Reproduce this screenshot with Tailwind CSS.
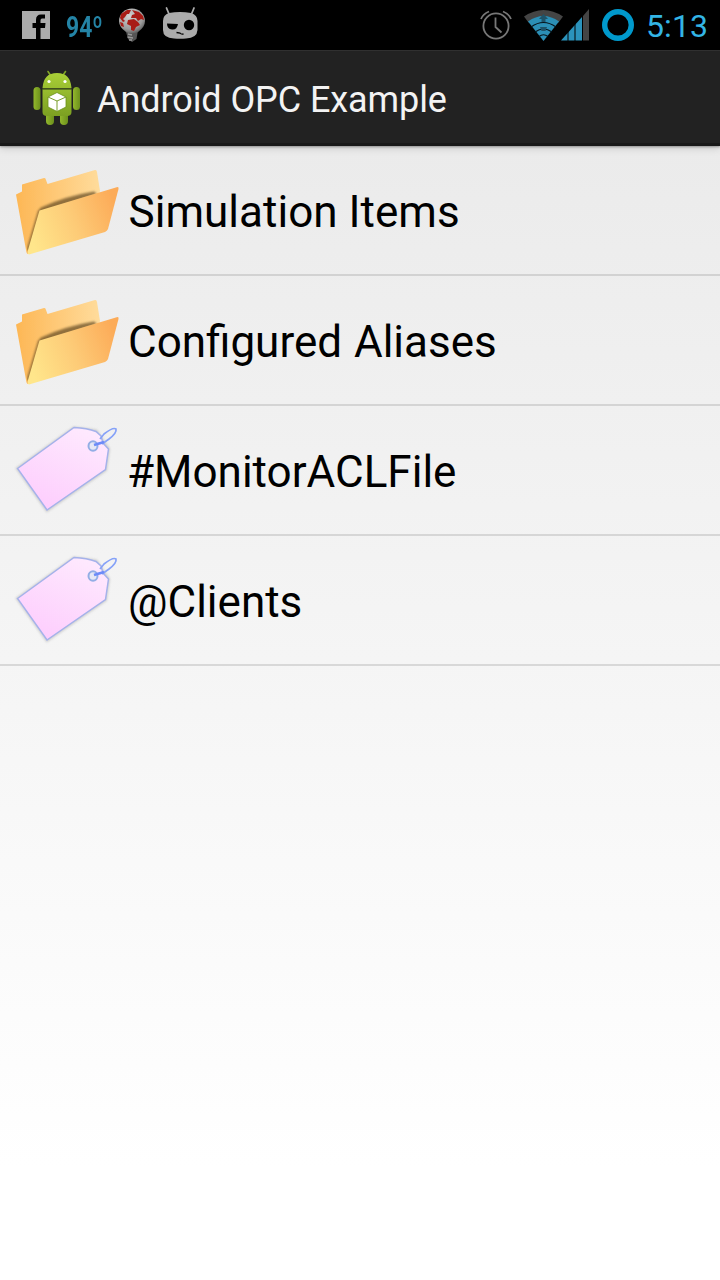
<!DOCTYPE html>
<html lang="en">
<head>
<meta charset="utf-8">
<meta name="viewport" content="width=device-width">
<title>Android OPC Example</title>
<script src="https://cdn.jsdelivr.net/npm/@tailwindcss/browser@4"></script>
</head>
<body class="w-[720px] h-[1280px] overflow-hidden flex flex-col font-[Roboto,sans-serif] bg-white">
<svg class="absolute w-0 h-0" aria-hidden="true">
  <defs>
    <linearGradient id="back" x1="0" x2="1"><stop offset="0" stop-color="#fdb755"/><stop offset="1" stop-color="#ffdc9c"/></linearGradient>
    <linearGradient id="front" x1="0" y1=".65" x2="1" y2=".35"><stop offset="0" stop-color="#ffe68b"/><stop offset=".5" stop-color="#fdcb77"/><stop offset="1" stop-color="#fcab58"/></linearGradient>
    <linearGradient id="pink" x1=".3" y1="1" x2=".8" y2="0"><stop offset="0" stop-color="#fdcdfd"/><stop offset="1" stop-color="#feeafe"/></linearGradient>
    <filter id="soft" x="-20%" y="-20%" width="140%" height="140%"><feGaussianBlur stdDeviation="1"/></filter>
    <filter id="edge" x="-10%" y="-10%" width="120%" height="120%"><feGaussianBlur stdDeviation=".5"/></filter>
    <clipPath id="folderBack"><path d="M16 194L22 191L22 183L44 177.500L47.500 184L96 170L101 192L101 225L28 254Z"/></clipPath>
    <symbol id="folder" viewBox="14 164 108 96">
      <g filter="url(#edge)">
        <path fill="url(#back)" d="M16 194.500L22 191.500V184.500L44 178Q45.500 177.500 46 180L47.500 184L95 170Q96.500 169.500 97 172L100 191L90 230L28 254Q26.500 254 26 250Z"/>
        <g clip-path="url(#folderBack)"><path d="M26.500 250L38 211L41 207.500Q66 196 94 191.500L97 194L40 213L29 252Z" fill="#6a5026" opacity=".75" filter="url(#soft)"/></g>
        <path fill="url(#front)" d="M39.500 210.500L117.500 187Q119 187 118.500 189L108 229Q107 231 105 232L29 254.500Q27 254 28 250Z"/>
      </g>
    </symbol>
    <symbol id="tag" viewBox="14 424 108 96">
      <path d="M17.500 468.500L74 428L96 431L108.500 449L105.500 470L47 510.500Z" fill="none" stroke="#999" stroke-opacity=".4" stroke-width="3" filter="url(#soft)"/>
      <path d="M17.500 468.500L74 427.500Q87 428 96 431.500L101 436L103 443L108.500 449L105.500 469.500L47 510Z" fill="url(#pink)" stroke="#a5b2ea" stroke-width="1.500" filter="url(#edge)"/>
      <g fill="none" stroke="#86a2f8" stroke-width="1.700" filter="url(#edge)"><ellipse cx="93" cy="446" rx="4.500" ry="4.800" fill="#e5e8f5" stroke="#93aee5" stroke-width="2"/><path d="M100 439L104 434Q113 427 116 429Q117 433 109 439L102 444"/><path d="M94 445L104 442" stroke="#6c8bf8" stroke-width="2.600"/></g>
    </symbol>
  </defs>
</svg>

<header class="h-[50px] shrink-0 bg-black flex items-start text-[#33b5e5]">
  <svg class="ml-5 w-8 h-[50px] shrink-0" viewBox="20 0 32 50"><path fill="#ababab" d="M22 11H50V39H40.500V28H45L45.500 23H40.500V20.500Q40.500 18.500 42 18.500H45V14.500H41Q36 14.500 36 20V23H32.500V28H36V39H22Z"/></svg>
  <span class="ml-[14px] w-[38px] h-[50px] shrink-0 font-bold text-[29px] leading-[54px] text-[#2484a6] whitespace-nowrap"><span class="inline-block origin-left scale-x-[.79]">94º</span></span>
  <svg class="ml-[13px] w-[30px] h-[50px] shrink-0" viewBox="117 0 30 50">
    <defs><radialGradient id="globe" cx=".4" cy=".3" r=".75"><stop offset="0" stop-color="#d2d2d2"/><stop offset=".7" stop-color="#9b9b9b"/><stop offset="1" stop-color="#555"/></radialGradient></defs>
    <g filter="url(#edge)"><path fill="#555" d="M125.500 30H138L136.500 39L132 42L128 39Z"/>
    <path stroke="#999" stroke-width="1.300" d="M128 34L132 35M127.500 37L133 38M129 40H132"/>
    <path d="M119 21A13 12.500 0 0 1 145 21Q145 27 138 32Q132 35 126 32Q119 27 119 21Z" fill="url(#globe)"/>
    <path fill="#a81b15" d="M121 14L127 10L131 10L129 14L127 14L125 17L123 19L125 21L123 22L120 18ZM132 10L139 12L143 16L144 20L141 19L138 21L136 18L131 18L132 15L135 14ZM128 20L134 19L138 22L140 25L136 27L134 31L131 30L131 26L127 24ZM120 22L123 23L124 27L121 26Z"/></g>
  </svg>
  <svg class="ml-[14px] w-[38px] h-[50px] shrink-0" viewBox="161 0 38 50">
    <path fill="none" stroke="#ababab" stroke-width="1.800" stroke-linecap="round" d="M166.500 8L169 14M194 8L191.500 14"/>
    <path fill="#ababab" d="M169 13Q180 11 191 13Q197.500 15 197.500 21V30Q197 38 186 38.500Q180 39 174 38.500Q163 38 163 30V21Q163 15 169 13Z"/>
    <path d="M167 23.500L178 24Q177 30 172 29.500Q167 29 167 23.500Z"/><circle cx="189" cy="25" r="5.200"/><path fill="none" stroke="#000" stroke-width="1.300" d="M176.500 32.500L180 33Q181 34.500 183.500 34"/>
  </svg>
  <svg class="ml-auto w-[34px] h-[50px] shrink-0" viewBox="479 0 34 50" fill="none" stroke="#777" stroke-width="1.800"><circle cx="496" cy="26" r="12.600"/><path d="M495.500 17.500V27L501.500 32.500M481 19Q483 14 489 11.500M511 19Q509 14 503 11.500"/></svg>
  <svg class="ml-[10px] w-[68px] h-[50px] shrink-0" viewBox="523 0 68 50">
    <path fill="#444" d="M524 16.500Q543.500 3.500 563 16.500L558.500 22.500Q543.500 12 528.500 22.500Z"/>
    <path fill="#2b8fb6" d="M528 21.500Q543.500 10.500 559 21.500L543.500 41Z"/>
    <path fill="none" stroke="#06131a" stroke-width="1.200" d="M531 27Q543.500 18 556 27M535 32Q543.500 26 552 32M539 36.500Q543.500 33 548 36.500"/>
    <path fill="#1e5369" d="M543.500 14L548 19H545.500V22H541.500V19H539ZM540 27H547L545.500 31H541.500Z"/>
    <path fill="#2b93bc" d="M561 40.500L582 17V40.500Z"/><path fill="#444" d="M583 16L589 9V40.500H583Z"/><path stroke="#000" stroke-width="1" d="M568 30V41M575 22V41M582.500 12V41"/>
  </svg>
  <svg class="ml-[10px] w-[34px] h-[50px] shrink-0" viewBox="601 0 34 50"><circle cx="618" cy="25" r="13.300" fill="none" stroke="#0099cc" stroke-width="5.400"/></svg>
  <time class="ml-[11px] w-[74px] text-[32px] leading-[52px] whitespace-nowrap tracking-[.1px]">5:13</time>
</header>

<div class="h-[96px] shrink-0 bg-[#222] border-t border-[#303030] flex items-start shadow-[0_1px_2px_rgba(0,0,0,.3),0_2px_8px_rgba(0,0,0,.15)] relative z-10 border-b-3 border-b-[#191919]">
  <svg class="ml-8 w-[50px] h-[92px] shrink-0" viewBox="32 51 50 92">
    <defs><linearGradient id="green" x1="0" y1="0" x2="0" y2="1"><stop offset="0" stop-color="#a9cf37"/><stop offset="1" stop-color="#7ca022"/></linearGradient><linearGradient id="limb"><stop stop-color="#92b72c"/><stop offset="1" stop-color="#6c901c"/></linearGradient></defs>
    <path stroke="#82a626" stroke-width="1.600" stroke-linecap="round" d="M48 71.500L51 76M65.500 71.500L62.500 76"/>
    <g fill="url(#limb)"><rect x="33.500" y="87" width="7" height="23" rx="3.500"/><rect x="73" y="87" width="7" height="23" rx="3.500"/><rect x="46" y="108" width="8" height="17" rx="4"/><rect x="60" y="108" width="8" height="17" rx="4"/></g>
    <path fill="url(#green)" d="M42.500 88Q43.500 73 57 73T71.500 88ZM42.500 89.500H71.500V112Q71.500 116 67 116H47Q42.500 116 42.500 112Z"/>
    <path stroke="#60811a" d="M42.500 89H71.500"/><circle cx="49" cy="81.500" r="1.600" fill="#fff"/><circle cx="65" cy="81.500" r="1.600" fill="#fff"/>
    <path fill="#fff" stroke="#6a9119" stroke-width=".8" stroke-linejoin="round" d="M57 92.500L66 97V107L57 111.500L48 107V97Z"/><path fill="none" stroke="#799d2b" d="M48 97L57 101L66 97M57 101V111.500"/>
  </svg>
  <h1 class="ml-[15px] text-[36px] leading-[98px] h-[92px] font-normal text-[#f3f3f3] whitespace-nowrap tracking-[-0.08px]">Android OPC Example</h1>
</div>

<main class="flex-1 bg-linear-to-b from-[#ebebeb] to-white to-90% text-black text-[44px] whitespace-nowrap">
  <ul>
    <li class="h-[130px] border-b-2 border-[#d2d2d2] flex items-center pt-1 pl-[14px]"><svg class="w-[108px] h-[96px] shrink-0"><use href="#folder"/></svg><span class="ml-[6.500px] tracking-[.03px]">Simulation Items</span></li>
    <li class="h-[130px] border-b-2 border-[#d4d4d4] flex items-center pt-1 pl-[14px]"><svg class="w-[108px] h-[96px] shrink-0"><use href="#folder"/></svg><span class="ml-[6px] [word-spacing:1px]">Configured Aliases</span></li>
    <li class="h-[130px] border-b-2 border-[#d6d6d6] flex items-center pt-1 pl-[14px]"><svg class="w-[108px] h-[96px] shrink-0"><use href="#tag"/></svg><span class="ml-[5px]">#MonitorACLFile</span></li>
    <li class="h-[130px] border-b-2 border-[#d8d8d8] flex items-center pt-1 pl-[14px]"><svg class="w-[108px] h-[96px] shrink-0"><use href="#tag"/></svg><span class="ml-[6px]">@Clients</span></li>
  </ul>
</main>
</body>
</html>
